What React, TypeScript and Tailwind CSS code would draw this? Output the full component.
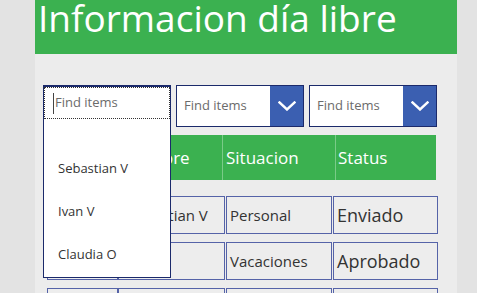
import React from "react";

const Chevron = () => (
  <svg width="18" height="10" viewBox="0 0 18 10" fill="none">
    <path d="M1.5 1.5 L9 8.5 L16.5 1.5" stroke="white" strokeWidth="2.4" strokeLinecap="square" />
  </svg>
);

const Combo = () => (
  <div className="flex w-[128px] h-[42px] border border-[#1b2a6b] bg-white">
    <div className="flex-1 flex items-center pl-[7px] text-[13px] text-[#6b6b6b]">Find items</div>
    <div className="w-[33px] bg-[#3b5fb1] flex items-center justify-center">
      <Chevron />
    </div>
  </div>
);

const Cell = ({ w, children, big }: { w: string; children?: React.ReactNode; big?: boolean }) => (
  <div
    className={`${w} h-full border border-[#5563a8] bg-[#ededed] flex items-center pl-[3px] text-[#333] ${
      big ? "text-[18px]" : "text-[15px]"
    }`}
  >
    {children}
  </div>
);

export default function App() {
  return (
    <div
      className="w-[477px] h-[293px] bg-[#e3e3e3] overflow-hidden flex"
      style={{ fontFamily: '"Open Sans", "Noto Sans", sans-serif' }}
    >
      <div className="w-[35px] shrink-0" />
      <div className="relative w-[422px] h-full bg-[#ececec] flex flex-col shrink-0 overflow-hidden">
        <div className="h-[54px] shrink-0 bg-[#3bb150] flex items-start pl-[3px]">
          <div className="text-white text-[37px] leading-[36px] whitespace-nowrap">Informacion día libre</div>
        </div>

        <div className="flex gap-[5px] pl-[8px] mt-[31px] shrink-0">
          <div className="w-[128px] h-[42px] border border-[#1b2a6b] bg-white" />
          <Combo />
          <Combo />
        </div>

        <div className="ml-[10px] mt-[8px] w-[391px] h-[45px] shrink-0 bg-[#3bb150] flex text-white text-[17px]">
          <div className="w-[73px] h-full border-r border-[#7acb88] flex items-center pl-[4px]">Fecha</div>
          <div className="w-[105px] h-full border-r border-[#7acb88] flex items-center pl-[6px]">Nombre</div>
          <div className="w-[113px] h-full border-r border-[#7acb88] flex items-center pl-[3px]">Situacion</div>
          <div className="flex-1 h-full flex items-center pl-[2px]">Status</div>
        </div>

        <div className="ml-[12px] mt-[16px] flex flex-col gap-[8px] shrink-0">
          <div className="h-[38px] flex shrink-0">
            <Cell w="w-[71px]" />
            <Cell w="w-[107px]">
              <span className="pl-[5px]">Sebastian V</span>
            </Cell>
            <div className="w-[1px]" />
            <Cell w="w-[106px]">Personal</Cell>
            <div className="w-[1px]" />
            <Cell w="w-[105px]" big>
              Enviado
            </Cell>
          </div>
          <div className="h-[38px] flex shrink-0">
            <Cell w="w-[71px]" />
            <Cell w="w-[107px]" />
            <div className="w-[1px]" />
            <Cell w="w-[106px]">Vacaciones</Cell>
            <div className="w-[1px]" />
            <Cell w="w-[105px]" big>
              Aprobado
            </Cell>
          </div>
          <div className="h-[38px] flex shrink-0">
            <Cell w="w-[71px]" />
            <Cell w="w-[107px]" />
            <div className="w-[1px]" />
            <Cell w="w-[106px]" />
            <div className="w-[1px]" />
            <Cell w="w-[105px]" />
          </div>
        </div>

        <div className="absolute left-[8px] top-[86px] w-[128px] h-[192px] bg-white border border-[#1b2a6b] flex flex-col">
          <div className="h-[32px] shrink-0 border border-dotted border-[#333] flex items-center pl-[8px] text-[13px] text-[#6b6b6b]">
            <span className="w-[1px] h-[21px] bg-[#444] mr-[1px]" />
            Find items
          </div>
          <div className="flex flex-col pl-[14px] text-[13px] text-[#333]">
            <div className="h-[43px] mt-[28px] flex items-center">Sebastian V</div>
            <div className="h-[43px] flex items-center">Ivan V</div>
            <div className="h-[43px] flex items-center">Claudia O</div>
          </div>
        </div>
      </div>
    </div>
  );
}
